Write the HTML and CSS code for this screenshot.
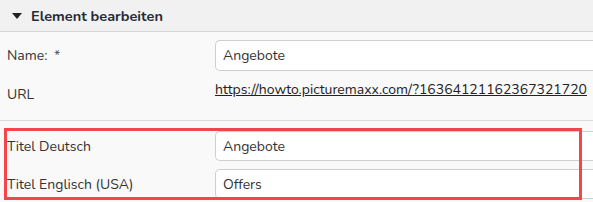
FILE: index.html
```html
<!DOCTYPE html>
<html lang="de">
<head>
  <meta charset="UTF-8">
  <title>Element bearbeiten</title>
  <link rel="stylesheet" href="styles.css">
</head>
<body>
  <div class="panel">
    <div class="panel-head">
      <span class="caret"></span>
      <span class="panel-title">Element bearbeiten</span>
    </div>
    <div class="panel-body">
      <div class="row">
        <label class="label">Name: <span class="req">*</span></label>
        <input class="field" type="text" value="Angebote">
      </div>
      <div class="row row-url">
        <span class="label">URL</span>
        <a class="link" href="#">https://howto.picturemaxx.com/?16364121162367321720</a>
      </div>
      <div class="sep"></div>
      <div class="row row-title">
        <label class="label">Titel Deutsch</label>
        <input class="field" type="text" value="Angebote">
      </div>
      <div class="row row-title">
        <label class="label">Titel Englisch (USA)</label>
        <input class="field" type="text" value="Offers">
      </div>
    </div>
    <div class="highlight"></div>
  </div>
</body>
</html>
```

FILE: styles.css
```css
html, body {
  margin: 0;
  overflow: hidden;
}
body {
  background-color: #f9f9f9;
  font-family: "Nunito", "Lato", "Noto Sans", sans-serif;
  font-size: 14px;
  color: #333;
}
.panel {
  position: relative;
  height: 202px;
  overflow: hidden;
}
.panel-head {
  display: flex;
  align-items: center;
  height: 31px;
  padding-left: 12px;
  background-color: #f1f1f1;
  border-bottom: 1px solid #d6d6d6;
}
.caret {
  width: 0;
  height: 0;
  border-left: 5px solid transparent;
  border-right: 5px solid transparent;
  border-top: 6px solid #222;
  margin-right: 9px;
}
.panel-title {
  font-weight: bold;
  font-size: 14.5px;
  color: #262a36;
}
.panel-body {
  padding-top: 8px;
}
.row {
  display: grid;
  grid-template-columns: 215px 1fr;
  align-items: center;
  margin-bottom: 8px;
}
.label {
  padding-left: 7px;
  color: #333;
}
.req {
  color: #555;
  margin-left: 3px;
}
.field {
  box-sizing: border-box;
  width: 100%;
  height: 31px;
  padding: 0 7px;
  border: 1px solid #cfcfcf;
  border-right: none;
  border-radius: 5px 0 0 5px;
  background-color: #fff;
  font-family: inherit;
  font-size: 14px;
  color: #333;
}
.row-title .field {
  height: 30px;
}
.row-url {
  align-items: start;
  height: 28px;
}
.row-url .label {
  padding-top: 4px;
  line-height: 24px;
}
.link {
  line-height: 20px;
  padding-top: 1px;
  color: #222;
  text-decoration: underline;
}
.sep {
  height: 1px;
  margin-top: 13px;
  margin-bottom: 10px;
  background-color: #d9d9d9;
}
.highlight {
  position: absolute;
  left: 4px;
  top: 128px;
  width: 572px;
  height: 66px;
  border: 3px solid #f4454a;
}
```
